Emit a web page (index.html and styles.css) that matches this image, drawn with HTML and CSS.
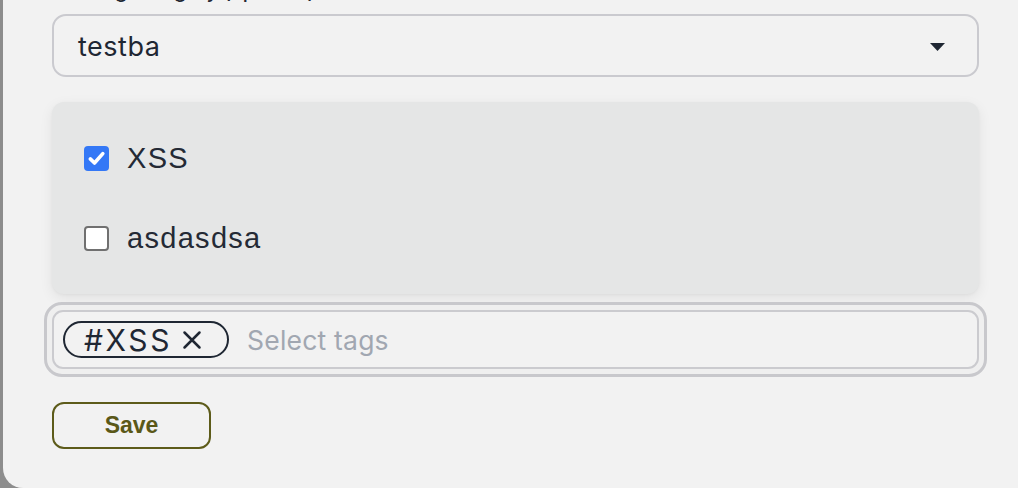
FILE: index.html
```html
<!DOCTYPE html>
<html lang="en">
<head>
<meta charset="utf-8">
<title>Tags</title>
<link rel="stylesheet" href="styles.css">
</head>
<body>
<div class="modal">
  <div class="label">Existing category (optional)</div>
  <div class="select">
    <span class="select-value">testba</span>
    <svg class="caret" width="15" height="8" viewBox="0 0 15 8"><polygon points="0,0 15,0 7.5,8" fill="#1f2733"/></svg>
  </div>
  <div class="dropdown">
    <div class="option">
      <span class="box checked">
        <svg width="25" height="25" viewBox="0 0 25 25"><path d="M6.3 12.9 L10.5 17 L18.8 7.6" fill="none" stroke="#fff" stroke-width="3.6" stroke-linecap="round" stroke-linejoin="round"/></svg>
      </span>
      <span class="option-text">XSS</span>
    </div>
    <div class="option">
      <span class="box"></span>
      <span class="option-text">asdasdsa</span>
    </div>
  </div>
  <div class="tags-ring">
    <div class="tags">
      <span class="chip"><span class="chip-text">#XSS</span><svg class="chip-x" width="20" height="20" viewBox="0 0 20 20"><path d="M2.5 2.5 L17.5 17.5 M17.5 2.5 L2.5 17.5" stroke="#1f2733" stroke-width="2.5" stroke-linecap="round"/></svg></span>
      <span class="placeholder">Select tags</span>
    </div>
  </div>
  <button class="save">Save</button>
</div>
</body>
</html>
```
FILE: styles.css
```css
html, body {
  margin: 0;
  padding: 0;
  background: #8d8d8d;
  overflow: hidden;
}
.modal {
  margin-left: 3px;
  height: 488px;
  box-sizing: border-box;
  background: #f2f2f2;
  border-bottom-left-radius: 20px;
  padding: 0 39px 0 49px;
  display: flex;
  flex-direction: column;
  align-items: stretch;
  font-family: Inter, "Noto Sans", sans-serif;
  color: #1f2733;
}
.label {
  font-size: 20px;
  line-height: 24px;
  height: 24px;
  margin-top: -21px;
  font-weight: 500;
  white-space: nowrap;
}
.select {
  margin-top: 11px;
  height: 63px;
  box-sizing: border-box;
  border: 2px solid #cacacf;
  border-radius: 14px;
  display: flex;
  align-items: center;
  justify-content: space-between;
  padding: 0 32px 0 24px;
}
.select-value {
  font-size: 27px;
  letter-spacing: 0.5px;
  margin-top: 2px;
}
.caret {
  display: block;
  margin-top: 2px;
}
.dropdown {
  margin-top: 25px;
  height: 192px;
  box-sizing: border-box;
  background: #e5e6e6;
  border-radius: 12px;
  box-shadow: 0 4px 14px rgba(0, 0, 0, 0.07), 0 1px 3px rgba(0, 0, 0, 0.04);
  padding: 30px 32px;
  display: flex;
  flex-direction: column;
  gap: 28px;
}
.option {
  height: 52px;
  display: flex;
  align-items: center;
  gap: 18px;
}
.box {
  width: 25px;
  height: 25px;
  box-sizing: border-box;
  border: 2px solid #707070;
  border-radius: 4px;
  background: #ffffff;
  display: flex;
}
.box.checked {
  border: none;
  background: #3478f6;
}
.option-text {
  font-family: "Liberation Sans", Arial, sans-serif;
  font-size: 29px;
  letter-spacing: 1.3px;
  color: #242a35;
}
.tags-ring {
  margin-top: 8px;
  border-radius: 18px;
  padding: 5px;
  border: 3px solid #c8c8cc;
  margin-left: -8px;
  margin-right: -8px;
  background: #efefef;
}
.tags {
  height: 59px;
  box-sizing: border-box;
  border: 2px solid #cbcbcf;
  border-radius: 11px;
  background: #f2f2f2;
  display: flex;
  align-items: center;
  padding: 0 9px;
  gap: 18px;
}
.chip {
  height: 37px;
  box-sizing: border-box;
  border: 2px solid #1f2733;
  border-radius: 19px;
  display: flex;
  align-items: center;
  padding: 0 25px 0 19px;
  gap: 10px;
}
.chip-text {
  font-size: 30px;
  letter-spacing: 2.6px;
}
.chip-x {
  display: block;
}
.placeholder {
  font-size: 26.5px;
  color: #a1a7b1;
  letter-spacing: 0.2px;
}
.save {
  margin-top: 25px;
  width: 159px;
  height: 47px;
  box-sizing: border-box;
  border: 2px solid #5d5b1a;
  border-radius: 12px;
  background: transparent;
  color: #5a5818;
  font-family: "Liberation Sans", Arial, sans-serif;
  font-weight: 700;
  font-size: 23px;
  padding: 0;
  cursor: pointer;
}
```
